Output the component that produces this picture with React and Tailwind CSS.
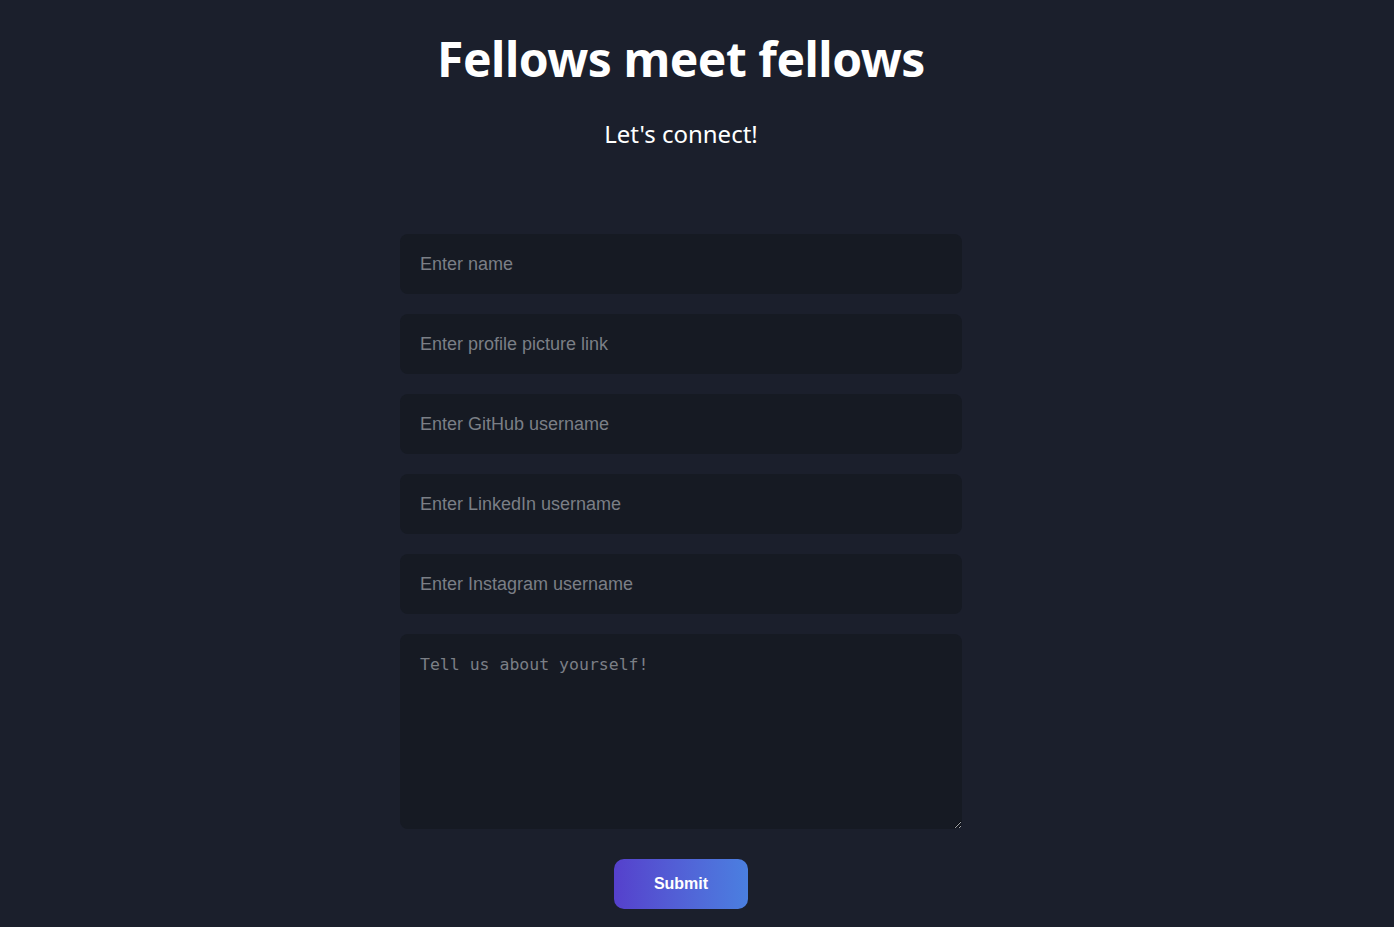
export default function App() {
  const fields = [
    "Enter name",
    "Enter profile picture link",
    "Enter GitHub username",
    "Enter LinkedIn username",
    "Enter Instagram username",
  ];

  return (
    <div className="min-h-screen bg-[#1b1f2c] text-white flex flex-col items-center pr-[32px] pb-[18px]">
      {/* Header */}
      <h1 className="mt-[29px] text-[48px] leading-[60px] font-bold font-['Noto_Sans',sans-serif] tracking-[-0.5px]">
        Fellows meet fellows
      </h1>
      <p className="mt-[29px] text-[24px] leading-[32px] font-['Noto_Sans',sans-serif]">
        Let's connect!
      </p>

      {/* Form */}
      <form className="mt-[84px] w-[562px] flex flex-col gap-5 items-center" onSubmit={(e) => e.preventDefault()}>
        {fields.map((f) => (
          <input
            key={f}
            type="text"
            placeholder={f}
            className="w-full h-[60px] rounded-lg bg-[#161a23] px-5 text-[18px] text-gray-200 font-['Liberation_Sans',Arial,sans-serif] placeholder:text-[#7b7f86] outline-none"
          />
        ))}
        <textarea
          placeholder="Tell us about yourself!"
          className="w-full h-[195px] rounded-lg bg-[#161a23] px-5 pt-[20px] text-[16.5px] leading-[22px] text-gray-200 font-['DejaVu_Sans_Mono',monospace] placeholder:text-[#7b7f86] outline-none"
        />
        <button
          type="submit"
          className="mt-[10px] w-[134px] h-[50px] rounded-[10px] bg-gradient-to-r from-[#5540cc] to-[#4a7fe0] text-white text-[16px] font-bold font-['Liberation_Sans',Arial,sans-serif]"
        >
          Submit
        </button>
      </form>
    </div>
  );
}
